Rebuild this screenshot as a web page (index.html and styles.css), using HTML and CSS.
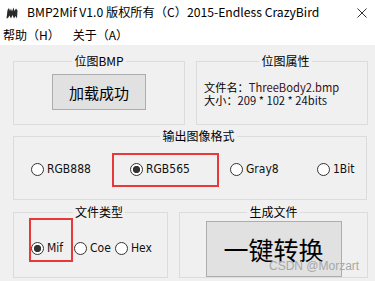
FILE: index.html
```html
<!DOCTYPE html>
<html lang="zh-CN">
<head>
<meta charset="utf-8">
<title>BMP2Mif</title>
<link rel="stylesheet" href="styles.css">
</head>
<body>
<div class="window">
  <header class="titlebar">
    <svg class="app-icon" viewBox="0 0 12 12" aria-hidden="true">
      <path d="M0.5 11.5 L1.5 3 L3 1 L4 4 L5 1.5 L6 4.5 L7.5 0.5 L8.5 4 L10 1.5 L11.5 3.5 L11 11.5 L9.5 9 L8 11.5 L6.5 8 L5 11.5 L3.5 8.5 L2 11 Z" fill="#2a2a2a"/>
    </svg>
    <span class="title">BMP2Mif V1.0 版权所有（C）2015-Endless CrazyBird</span>
    <svg class="close" viewBox="0 0 10 10" aria-hidden="true">
      <path d="M0.5 0.5 L9.5 9.5 M9.5 0.5 L0.5 9.5" stroke="#333" stroke-width="1" fill="none"/>
    </svg>
  </header>
  <nav class="menubar">
    <span class="menu-item">帮助（H）</span>
    <span class="menu-item">关于（A）</span>
  </nav>
  <main class="client">
    <div class="row row-top">
      <fieldset class="group g-bmp">
        <legend>位图BMP</legend>
        <button class="btn btn-load" type="button">加载成功</button>
      </fieldset>
      <fieldset class="group g-attr">
        <legend>位图属性</legend>
        <div class="info-line">文件名：<span class="fname">ThreeBody2.bmp</span></div>
        <div class="info-line">大小：<span class="fsize">209 * 102 * 24bits</span></div>
      </fieldset>
    </div>
    <fieldset class="group g-format">
      <legend>输出图像格式</legend>
      <div class="radios format-radios">
        <label class="radio"><input type="radio" name="fmt">RGB888</label>
        <label class="radio marked"><input type="radio" name="fmt" checked>RGB565<span class="mark mark-fmt"></span></label>
        <label class="radio"><input type="radio" name="fmt">Gray8</label>
        <label class="radio"><input type="radio" name="fmt">1Bit</label>
      </div>
    </fieldset>
    <div class="row row-bottom">
      <fieldset class="group g-type">
        <legend>文件类型</legend>
        <div class="radios type-radios">
          <label class="radio marked"><input type="radio" name="typ" checked>Mif<span class="mark mark-type"></span></label>
          <label class="radio"><input type="radio" name="typ">Coe</label>
          <label class="radio"><input type="radio" name="typ">Hex</label>
        </div>
      </fieldset>
      <fieldset class="group g-gen">
        <legend>生成文件</legend>
        <button class="btn btn-convert" type="button">一键转换</button>
      </fieldset>
    </div>
  </main>
  <div class="watermark">CSDN @Morzart</div>
</div>
</body>
</html>
```
FILE: styles.css
```css
html, body {
  margin: 0;
  padding: 0;
}
body {
  width: 375px;
  height: 281px;
  overflow: hidden;
  background: #f0f0f0;
  font-family: "Noto Sans CJK SC", "Noto Sans", sans-serif;
  color: #000;
}
.window {
  position: relative;
  width: 375px;
  height: 281px;
}
.titlebar {
  display: flex;
  align-items: center;
  height: 25px;
  background: #fff;
  padding-left: 6px;
}
.app-icon {
  width: 12px;
  height: 12px;
  margin-right: 9px;
  flex: none;
}
.title {
  font-size: 12.2px;
  line-height: 25px;
  white-space: nowrap;
}
.close {
  width: 10px;
  height: 10px;
  margin-left: auto;
  margin-right: 8px;
  flex: none;
}
.menubar {
  display: flex;
  align-items: center;
  height: 20px;
  background: #fff;
  padding-left: 3px;
  font-size: 12px;
  line-height: 20px;
}
.menu-item {
  margin-right: 13px;
}
.client {
  padding: 8px 8px 0 13px;
}
.row {
  display: grid;
}
.row-top {
  grid-template-columns: 172px 172px;
  column-gap: 11px;
}
.row-bottom {
  grid-template-columns: 155px 189px;
  column-gap: 11px;
  margin-top: 4px;
}
.group {
  margin: 0;
  min-width: 0;
  border: 1px solid #dcdcdc;
  padding: 0;
}
.group legend {
  margin: 0 auto;
  padding: 0 2px;
  font-size: 12px;
  line-height: 16px;
  height: 16px;
}
.g-bmp {
  padding: 5px 0 14px;
  display: flex;
  justify-content: center;
}
.btn {
  font-family: "Noto Sans CJK SC", sans-serif;
  background: #e1e1e1;
  border: 1px solid #adadad;
  color: #000;
  padding: 0;
  margin: 0 auto;
  display: block;
}
.btn-load {
  width: 94px;
  height: 36px;
  font-size: 15px;
}
.g-attr {
  padding: 12px 0 0 7px;
}
.info-line {
  font-size: 11.2px;
  line-height: 13px;
  height: 13px;
  white-space: nowrap;
}
.fname {
  color: #3d1010;
}
.fsize {
  color: #10102a;
}
.g-format {
  margin-top: 3px;
  padding: 17px 0 22px 17px;
}
.radios {
  display: grid;
  align-items: center;
}
.format-radios {
  grid-template-columns: 99px 100px 87px auto;
}
.type-radios {
  grid-template-columns: 43px 41px auto;
}
.radio {
  position: relative;
  display: flex;
  align-items: center;
  height: 16px;
  font-family: "DejaVu Sans", sans-serif;
  font-stretch: condensed;
  font-size: 12px;
  color: #111;
  white-space: nowrap;
}
.radio input {
  appearance: none;
  -webkit-appearance: none;
  width: 13px;
  height: 13px;
  margin: 0 3px 0 0;
  border: 1px solid #333;
  border-radius: 50%;
  background: #fff;
  flex: none;
}
.radio input:checked {
  background: radial-gradient(circle at center, #333 0 3.4px, #fff 3.9px);
}
.mark {
  position: absolute;
  border: 2px solid #e8383a;
  box-sizing: border-box;
}
.mark-fmt {
  left: -18px;
  top: -8px;
  width: 107px;
  height: 34px;
}
.mark-type {
  left: -2px;
  top: -22px;
  width: 44px;
  height: 44px;
}
.g-type {
  padding: 20px 0 0 17px;
}
.g-gen {
  padding: 1px 0 0;
}
.btn-convert {
  width: 136px;
  height: 56px;
  font-size: 25px;
  line-height: 1;
}
.watermark {
  position: absolute;
  left: 269px;
  top: 258px;
  font-family: "Liberation Sans", sans-serif;
  font-size: 12px;
  line-height: 16px;
  color: #a8a8a8;
  white-space: nowrap;
}
```
